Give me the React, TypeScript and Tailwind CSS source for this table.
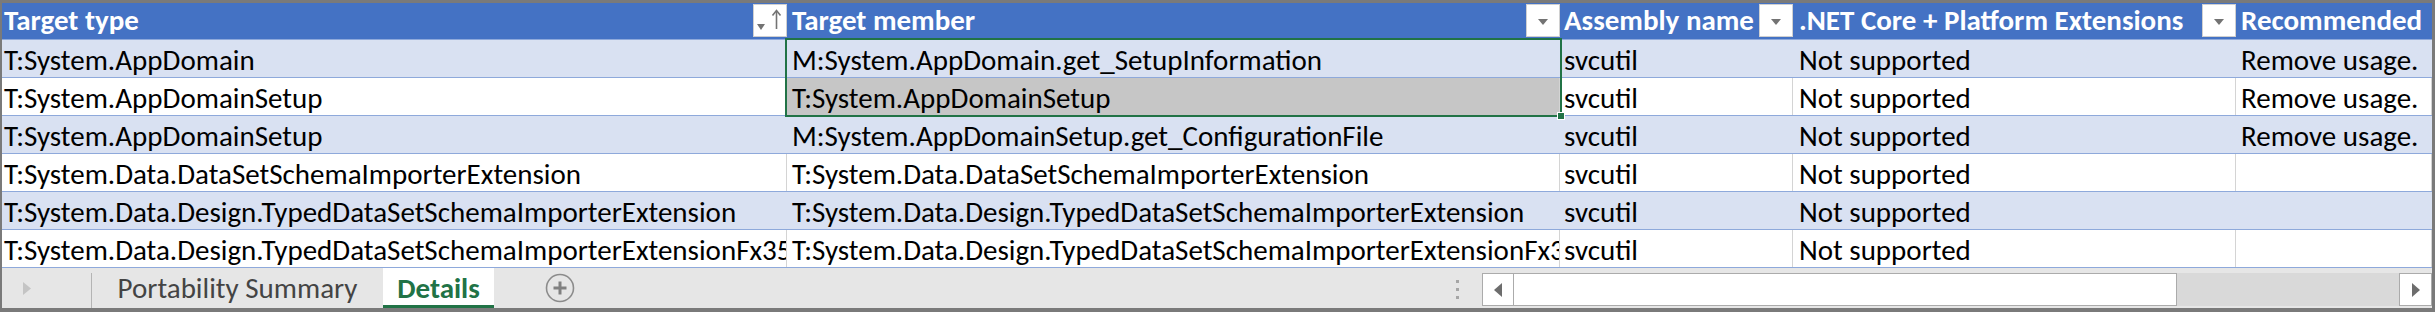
const GREEN = '#217346'

const COLUMNS = [
  { title: 'Target type', width: 'w-[785px]', pad: 'pl-[2px]', filter: 'sort' },
  { title: 'Target member', width: 'w-[773px]', pad: 'pl-[5px]', filter: 'plain' },
  { title: 'Assembly name', width: 'w-[233px]', pad: 'pl-[4px]', filter: 'plain' },
  { title: '.NET Core + Platform Extensions', width: 'w-[443px]', pad: 'pl-[6px]', filter: 'plain' },
  { title: 'Recommended', width: 'flex-1', pad: 'pl-[5px]', filter: 'none' },
] as const

const ROWS = [
  ['T:System.AppDomain', 'M:System.AppDomain.get_SetupInformation', 'svcutil', 'Not supported', 'Remove usage.'],
  ['T:System.AppDomainSetup', 'T:System.AppDomainSetup', 'svcutil', 'Not supported', 'Remove usage.'],
  ['T:System.AppDomainSetup', 'M:System.AppDomainSetup.get_ConfigurationFile', 'svcutil', 'Not supported', 'Remove usage.'],
  ['T:System.Data.DataSetSchemaImporterExtension', 'T:System.Data.DataSetSchemaImporterExtension', 'svcutil', 'Not supported', ''],
  ['T:System.Data.Design.TypedDataSetSchemaImporterExtension', 'T:System.Data.Design.TypedDataSetSchemaImporterExtension', 'svcutil', 'Not supported', ''],
  ['T:System.Data.Design.TypedDataSetSchemaImporterExtensionFx35', 'T:System.Data.Design.TypedDataSetSchemaImporterExtensionFx35', 'svcutil', 'Not supported', ''],
]

function FilterButton({ sorted }: { sorted: boolean }) {
  return (
    <div className="shrink-0 self-start mt-[1px] w-[34px] h-[33px] bg-white border border-[#d0d0d0]">
      <svg width="32" height="31" viewBox="0 0 32 31">
        {sorted ? (
          <>
            <polygon points="3,19 11,19 7,25" fill="#737373" />
            <line x1="22.5" y1="6" x2="22.5" y2="24" stroke="#737373" strokeWidth="1.6" />
            <polyline points="18.5,10.5 22.5,5.5 26.5,10.5" fill="none" stroke="#737373" strokeWidth="1.6" />
          </>
        ) : (
          <polygon points="11,14 21,14 16,20" fill="#737373" />
        )}
      </svg>
    </div>
  )
}

function HeaderRow() {
  return (
    <div className="flex h-[37px] bg-[#4472C4] border-b border-[#8EA9DB]">
      {COLUMNS.map((col) => (
        <div key={col.title} className={`flex min-w-0 ${col.width}`}>
          <span
            className={`flex-1 min-w-0 self-end pb-[4px] overflow-hidden whitespace-nowrap leading-none font-bold text-white ${col.pad}`}
          >
            {col.title}
          </span>
          {col.filter !== 'none' && <FilterButton sorted={col.filter === 'sort'} />}
        </div>
      ))}
    </div>
  )
}

function DataRow({ cells, index }: { cells: string[]; index: number }) {
  const banded = index % 2 === 0
  return (
    <div className={`flex h-[38px] border-b border-[#8EA9DB] ${banded ? 'bg-[#D9E1F2]' : 'bg-white'}`}>
      {cells.map((text, col) => {
        const selected = index === 1 && col === 1
        return (
          <div
            key={col}
            className={`flex items-end pb-[2px] min-w-0 overflow-hidden whitespace-nowrap leading-none border-r ${COLUMNS[col].width} ${COLUMNS[col].pad} ${
              banded ? 'border-[#D9E1F2]' : 'border-[#D4D4D4]'
            } ${selected ? 'bg-[#C6C6C6]' : ''}`}
          >
            <span>{text}</span>
          </div>
        )
      })}
    </div>
  )
}

function SheetTabs() {
  return (
    <div className="flex flex-1 bg-[#E6E6E6]">
      <div className="w-[89px] shrink-0 pl-[21px] pt-[14px]">
        <svg width="8" height="13" viewBox="0 0 8 13">
          <polygon points="0,0 8,6.5 0,13" fill="#c4c4c4" />
        </svg>
      </div>
      <div className="w-px mt-[5px] bg-[#b4b4b4]" />
      <div className="w-[291px] flex items-center justify-center leading-none text-[#444444]">
        Portability Summary
      </div>
      <div className="w-[111px] flex items-center justify-center leading-none font-bold text-[#217346] bg-white border-b-[3px] border-[#217346]">
        <span className="pt-[3px]">Details</span>
      </div>
      <div className="ml-[51px] flex items-center">
        <svg width="30" height="30" viewBox="0 0 30 30">
          <circle cx="15" cy="15" r="13.5" fill="none" stroke="#8c8c8c" strokeWidth="1.6" />
          <line x1="8.5" y1="15" x2="21.5" y2="15" stroke="#808080" strokeWidth="3" />
          <line x1="15" y1="8.5" x2="15" y2="21.5" stroke="#808080" strokeWidth="3" />
        </svg>
      </div>
      <div className="flex-1" />
      <div className="flex flex-col gap-[5px] pt-[12px] mr-[23px]">
        <div className="w-[3px] h-[3px] bg-[#a6a6a6]" />
        <div className="w-[3px] h-[3px] bg-[#a6a6a6]" />
        <div className="w-[3px] h-[3px] bg-[#a6a6a6]" />
      </div>
      <div className="flex w-[950px] h-[33px] mt-[5px] bg-[#D9D9D9]">
        <div className="w-[32px] flex items-center justify-center bg-white border border-[#ababab]">
          <svg width="8" height="14" viewBox="0 0 8 14">
            <polygon points="8,0 0,7 8,14" fill="#6d6d6d" />
          </svg>
        </div>
        <div className="w-[663px] bg-white border border-l-0 border-[#ababab]" />
        <div className="flex-1" />
        <div className="w-[33px] flex items-center justify-center bg-white border border-[#ababab]">
          <svg width="8" height="14" viewBox="0 0 8 14">
            <polygon points="0,0 8,7 0,14" fill="#6d6d6d" />
          </svg>
        </div>
      </div>
    </div>
  )
}

export default function App() {
  return (
    <div className="w-[2435px] h-[312px] flex flex-col bg-white border-[#7a7a7a] border-t-[3px] border-l-[2px] border-r-[3px] border-b-[4px] font-['Carlito','Lato',sans-serif] text-[29px] text-black">
      <div className="relative">
        <HeaderRow />
        {ROWS.map((cells, i) => (
          <DataRow key={i} cells={cells} index={i} />
        ))}
        <div
          className="absolute left-[783px] top-[35px] w-[777px] h-[79px] border-2"
          style={{ borderColor: GREEN }}
        >
          <div className="absolute right-[-5px] bottom-[-5px] w-[8px] h-[8px] bg-[#217346] border border-white" />
        </div>
      </div>
      <SheetTabs />
    </div>
  )
}
